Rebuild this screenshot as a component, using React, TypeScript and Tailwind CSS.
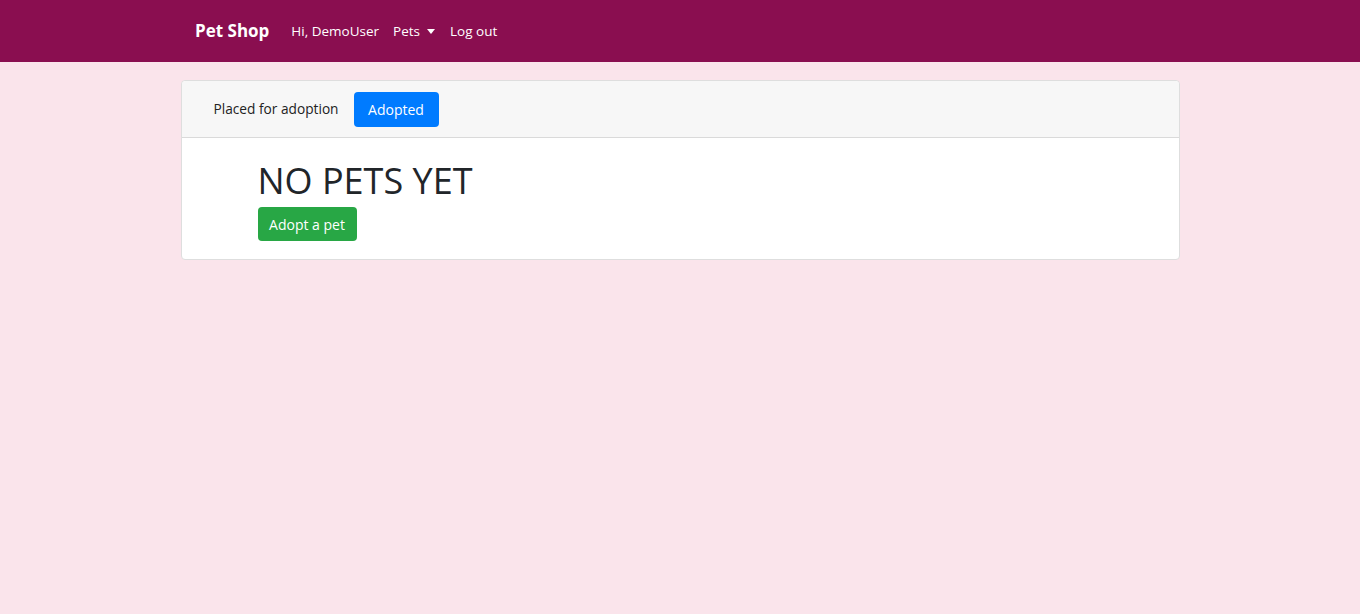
import React from "react";

export default function App() {
  return (
    <div className="min-h-[614px] bg-[#fae4eb] font-['Open_Sans',sans-serif]">
      <nav className="h-[62px] bg-[#8a0e50]">
        <div className="mx-auto flex h-full w-[1000px] items-center pl-[15px]">
          <span className="mr-[22px] text-[17px] font-bold text-white">Pet Shop</span>
          <div className="flex items-center text-[13.5px] text-white">
            <span className="mr-[14px]">Hi, DemoUser</span>
            <span className="mr-[15px] flex items-center">
              Pets
              <span className="ml-[7px] inline-block h-0 w-0 border-x-[4.5px] border-t-[5px] border-x-transparent border-t-white" />
            </span>
            <span>Log out</span>
          </div>
        </div>
      </nav>
      <div className="mx-auto mt-[18px] w-[999px] rounded-[4px] border border-[#dedede] bg-white">
        <div className="flex h-[57px] items-center rounded-t-[4px] border-b border-[#dadada] bg-[#f7f7f7] pl-[32px]">
          <span className="mr-[15px] text-[13.7px] text-[#222]">Placed for adoption</span>
          <span className="flex h-[35px] w-[85px] items-center justify-center rounded-[4px] bg-[#007bff] text-[14px] text-white">
            Adopted
          </span>
        </div>
        <div className="pb-[18px] pl-[76px] pt-[18px]">
          <h1 className="text-[36px] font-medium leading-[50px] text-[#212529]">NO PETS YET</h1>
          <span className="mt-[1px] flex h-[34px] w-[99px] items-center justify-center rounded-[4px] bg-[#28a745] text-[14px] text-white">
            Adopt a pet
          </span>
        </div>
      </div>
    </div>
  );
}
